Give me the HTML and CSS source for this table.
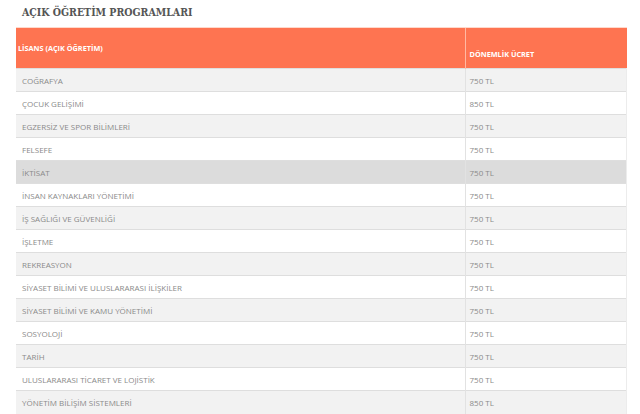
FILE: index.html
```html
<!DOCTYPE html>
<html lang="tr">
<head>
<meta charset="utf-8">
<link rel="stylesheet" href="styles.css">
</head>
<body>
<div class="wrap">
  <h2 class="title">AÇIK ÖĞRETİM PROGRAMLARI</h2>
  <table class="fees">
    <thead>
      <tr>
        <th class="c-name">LİSANS (AÇIK ÖĞRETİM)</th>
        <th class="c-fee">DÖNEMLİK ÜCRET</th>
      </tr>
    </thead>
    <tbody>
      <tr><td>COĞRAFYA</td><td>750 TL</td></tr>
      <tr><td>ÇOCUK GELİŞİMİ</td><td>850 TL</td></tr>
      <tr><td>EGZERSİZ VE SPOR BİLİMLERİ</td><td>750 TL</td></tr>
      <tr><td>FELSEFE</td><td>750 TL</td></tr>
      <tr class="hover"><td>İKTİSAT</td><td>750 TL</td></tr>
      <tr><td>İNSAN KAYNAKLARI YÖNETİMİ</td><td>750 TL</td></tr>
      <tr><td>İŞ SAĞLIĞI VE GÜVENLİĞİ</td><td>750 TL</td></tr>
      <tr><td>İŞLETME</td><td>750 TL</td></tr>
      <tr><td>REKREASYON</td><td>750 TL</td></tr>
      <tr><td>SİYASET BİLİMİ VE ULUSLARARASI İLİŞKİLER</td><td>750 TL</td></tr>
      <tr><td>SİYASET BİLİMİ VE KAMU YÖNETİMİ</td><td>750 TL</td></tr>
      <tr><td>SOSYOLOJİ</td><td>750 TL</td></tr>
      <tr><td>TARİH</td><td>750 TL</td></tr>
      <tr><td>ULUSLARARASI TİCARET VE LOJİSTİK</td><td>750 TL</td></tr>
      <tr><td>YÖNETİM BİLİŞİM SİSTEMLERİ</td><td>850 TL</td></tr>
    </tbody>
  </table>
  <div class="next"></div>
</div>
</body>
</html>
```
FILE: styles.css
```css
html, body {
  margin: 0;
  padding: 0;
  background: #fff;
}
.wrap {
  padding-left: 16px;
  width: 611px;
}
.title {
  margin: 0;
  height: 27px;
  box-sizing: border-box;
  padding: 6px 0 0 6px;
  font-family: "DejaVu Serif Condensed", "DejaVu Serif", serif;
  font-weight: bold;
  font-size: 10.5px;
  line-height: 13px;
  color: #555;
}
.fees {
  width: 611px;
  border-collapse: collapse;
  font-family: "Open Sans", sans-serif;
  font-size: 8px;
  table-layout: fixed;
}
.fees th {
  background: #fe7451;
  color: #fff;
  font-weight: bold;
  font-size: 7.3px;
  text-align: left;
  height: 41px;
  padding: 0;
  box-sizing: border-box;
  border-top: 1px solid #ffd9cc;
}
.fees th.c-name {
  width: 449px;
  padding-left: 2px;
  vertical-align: middle;
}
.fees th.c-fee {
  vertical-align: bottom;
  padding-left: 4px;
  padding-bottom: 9px;
  border-left: 1px solid #ffb9a3;
}
.fees td {
  height: 23px;
  box-sizing: border-box;
  padding: 0 0 0 6px;
  color: #8a8a8a;
  border-top: 1px solid #dedede;
  vertical-align: middle;
}
.fees td + td {
  padding-left: 4px;
  border-left: 1px solid #e2e2e2;
  border-right: 1px solid #ececec;
}
.fees tbody tr:nth-child(odd) td {
  background: #f2f2f2;
}
.fees tbody tr.hover td {
  background: #dcdcdc;
}
.next {
  height: 4px;
  background: #f07a55;
}
```
